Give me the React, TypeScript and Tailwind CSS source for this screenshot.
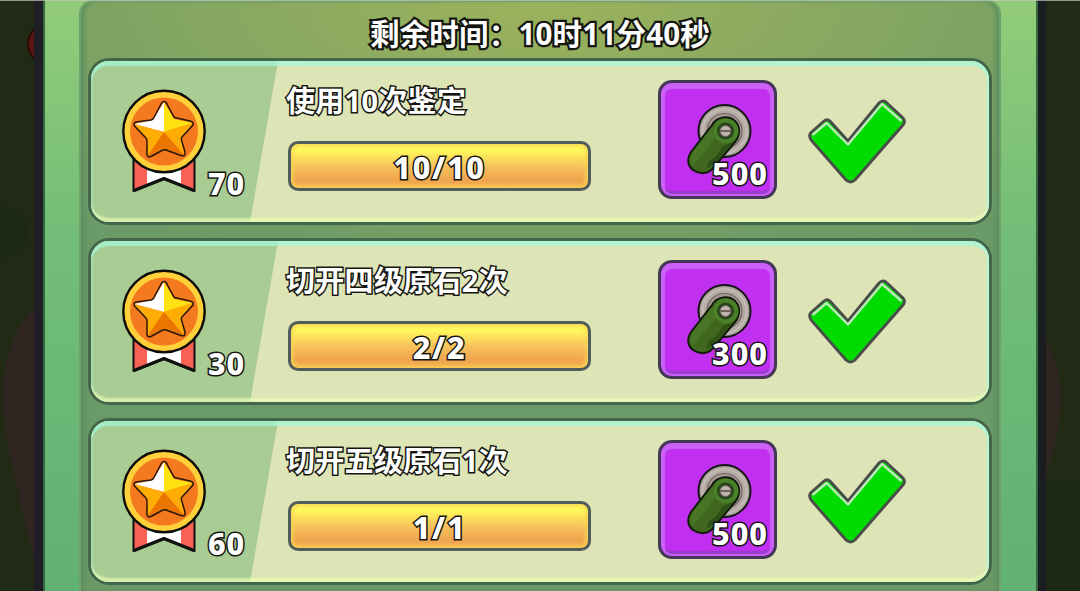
import { ReactNode } from "react"
import clsx from "clsx"

interface Task {
  title: string
  points: number
  progress: string
  reward: number
}

const tasks: Task[] = [
  { title: "使用10次鉴定", points: 70, progress: "10/10", reward: 500 },
  { title: "切开四级原石2次", points: 30, progress: "2/2", reward: 300 },
  { title: "切开五级原石1次", points: 60, progress: "1/1", reward: 500 },
]

function GameText({ children, className }: { children: ReactNode; className?: string }) {
  return (
    <span
      className={clsx(
        "block whitespace-nowrap leading-[40px] text-white [paint-order:stroke_fill]",
        className
      )}
    >
      {children}
    </span>
  )
}

function Medal() {
  return (
    <svg className="block h-[106px] w-[88px]" viewBox="0 0 88 106">
      <path d="M13 66H75V103L44 91L13 103Z" fill="#fb6256" />
      <path d="M27 66H61V96L44 90L27 96Z" fill="#fff" />
      <path d="M13.500 66H74.500V103L44 91L13.500 103Z" fill="none" stroke="#10110f" strokeWidth="2" strokeLinejoin="round" />
      <path d="M14 102.500L44 90.500L74 102.500" fill="none" stroke="#10110f" strokeWidth="3" strokeLinejoin="round" />
      <circle cx="44" cy="43.500" r="40.700" fill="#ffd03a" stroke="#0b0b08" strokeWidth="2.400" />
      <circle cx="44" cy="43.500" r="34" fill="#f5791f" />
      <g>
        <path d="M44 44V14L54 31L73 35Z" fill="#ffe211" />
        <path d="M44 44V14L33 32L14 36Z" fill="#fff" />
        <path d="M44 44L14 36L27 51L27 69Z" fill="#ffac05" />
        <path d="M44 44L27 69L44 62L64 67Z" fill="#ea7500" />
        <path d="M44 44L64 67L62 50L73 35Z" fill="#ffac05" />
      </g>
      <path
        d="M44 13.500Q46 13 48 18L54 29Q55 30 57 30L70 33Q74 34 73 37L62 49Q61 50 61.500 52L65 64Q66 69 61 67.500L46 62Q44 61.500 42 62.500L31 68.500Q27 70 27 66V53Q27 51 25.500 49.500L14.500 38Q13 35 16 34L31 32Q33 31.500 34 29.500L40 18Q42 13.500 44 13.500Z"
        fill="none"
        stroke="#29170a"
        strokeWidth="1.500"
      />
    </svg>
  )
}

function Crank() {
  return (
    <svg className="block h-[74px] w-[68px]" viewBox="0 0 68 74">
      <circle cx="37.500" cy="29" r="26" fill="#aea49f" stroke="#141414" strokeWidth="2" />
      <circle cx="37.500" cy="29" r="22" fill="#b3a8a4" stroke="#c2b9b3" strokeWidth="2.500" />
      <circle cx="37.500" cy="29" r="17.500" fill="#a89995" stroke="#706461" strokeWidth="1.200" />
      <path
        d="M25 23C30 14 42 13 48 19C54 25 53 34 48 40L27 65C22 72 13 73 6 68C0 63 0 56 4 50Z"
        fill="#3f681e"
        stroke="#11190b"
        strokeWidth="2"
      />
      <path d="M26 24L6 50C2 56 3 61 6 64L30 34Z" fill="#487425" />
      <path d="M46 40L36 44L29 54L22 59L19 67L27 63Z" fill="#2f5217" />
      <circle cx="39" cy="29" r="12.500" fill="#4a8027" />
      <circle cx="38.500" cy="29" r="8.500" fill="#29451b" />
      <circle cx="38.500" cy="29" r="5.500" fill="#c0b4b1" stroke="#655b57" />
      <path d="M33.500 29H43.500" stroke="#5b4942" strokeWidth="1.500" />
    </svg>
  )
}

function CheckMark() {
  return (
    <svg className="block h-[88px] w-[102px]" viewBox="0 0 102 88">
      <path
        d="M3.500 35L17 23Q20 20.500 23 23L41 43L72 5Q75.500 1.500 79 4L96 20Q99 23.500 96 27L48 82Q43.500 86 39 82L4 42Q1.500 38 3.500 35Z"
        fill="#00dc00"
        stroke="#4b4b4b"
        strokeWidth="2.800"
      />
      <path d="M5.500 37L19.500 25L41 46.500L75 6L94.500 23" fill="none" stroke="#bfe9bb" strokeWidth="2.400" strokeLinejoin="round" />
    </svg>
  )
}

function RewardSlot({ amount }: { amount: number }) {
  return (
    <div className="relative h-[119px] w-[119px] rounded-[14px] border-[3px] border-[#453857] bg-[#c130f0] shadow-[inset_0_2px_1px_4px_#cb61f7,inset_0_-4px_1px_1px_#973dcc]">
      <div className="pl-[26px] pt-[19px]">
        <Crank />
      </div>
      <GameText className="absolute right-[6px] top-[70px] text-[30.500px] font-extrabold tracking-[1px] [-webkit-text-stroke:3px_#14150f]">
        {amount}
      </GameText>
    </div>
  )
}

function TaskCard({ task }: { task: Task }) {
  return (
    <div className="relative flex h-[167px] w-[904px] overflow-hidden rounded-[21px] border-[3px] border-[#43664a] bg-[#dde4b5]">
      <div className="flex h-full w-[187px] shrink-0 bg-[#a9cb94] pl-[29px] pt-[27px] [clip-path:polygon(0_0,100%_0,159px_100%,0_100%)]">
        <Medal />
        <GameText className="mt-[75px] text-[30.500px] font-extrabold tracking-[0.8px] [-webkit-text-stroke:3px_#14150f]">
          {task.points}
        </GameText>
      </div>
      <div className="w-[311px] shrink-0 pl-[10px] pt-[20px]">
        <GameText className="-ml-[2px] text-[29px] font-bold tracking-[0.3px] [-webkit-text-stroke:3px_#14150f]">
          {task.title}
        </GameText>
        <div className="mt-[20px] flex h-[50px] w-[303px] items-center justify-center rounded-[10px] border-[3px] border-[#505d5b] bg-linear-to-b from-[#fff85c] from-15% via-[#f7c35b] via-50% to-[#f0a650] to-80% shadow-[inset_0_0_4px_2px_#f9d854]">
          <GameText className="pt-px text-[30.500px] font-extrabold tracking-[1.8px] [-webkit-text-stroke:3px_#14150f]">
            {task.progress}
          </GameText>
        </div>
      </div>
      <div className="pl-[69px] pt-[19px]">
        <RewardSlot amount={task.reward} />
      </div>
      <div className="pl-[30px] pt-[37px]">
        <CheckMark />
      </div>
      <div className="pointer-events-none absolute inset-0 rounded-[18px] shadow-[inset_0_6px_1px_-1px_#a4f8d8b8,inset_0_-5px_2px_-1px_#edffb6aa,inset_-2px_0_1px_#b9f6d9,inset_2px_0_2px_#a4e8c099]" />
    </div>
  )
}

export default function App() {
  return (
    <div className="flex h-[591px] w-[1080px] overflow-hidden bg-[#202a14] font-['Noto_Sans','Noto_Sans_CJK_SC',sans-serif]">
      <svg className="h-full w-[34px] shrink-0" viewBox="0 0 34 591">
        <ellipse cx="38" cy="44" rx="10" ry="15" fill="#5b1713" stroke="#2b0d08" strokeWidth="2" />
        <circle cx="3" cy="232" r="25" fill="#1c2914" />
        <path d="M34 308Q6 335 3 390Q3 430 13 470L34 560Z" fill="#302521" />
      </svg>
      <div className="h-full w-[9px] shrink-0 bg-[#1f1e26]" />
      <div className="flex h-full w-[995px] shrink-0 border-x-2 border-[#34683f] bg-linear-to-b from-[#93cc79] via-[#72bd78] via-40% to-[#62b174] pl-[34px]">
        <div className="h-full w-[922px] rounded-t-[14px] border-x-2 border-t-2 border-[#6ea46c] bg-[radial-gradient(ellipse_720px_280px_at_50%_0,#9db35c,#6a9a67)] shadow-[inset_6px_0_5px_-3px_#5c8b60,inset_-6px_0_5px_-3px_#5c8b60]">
          <GameText className="h-[56px] pt-[12px] text-center text-[29.500px] font-bold tracking-[0.2px] [-webkit-text-stroke:4.4px_#14150f]">
            剩余时间：10时11分40秒
          </GameText>
          <div className="flex w-[911px] flex-col gap-[13px] pl-[7px]">
            {tasks.map((task) => (
              <TaskCard key={task.title} task={task} />
            ))}
          </div>
        </div>
      </div>
      <div className="h-full w-[8px] shrink-0 bg-[#1c1d23]" />
      <svg className="h-full w-[34px] shrink-0" viewBox="0 0 34 591">
        <path d="M0 340Q29 390 0 475Z" fill="#302521" />
        <path d="M0 482H34V591H0Z" fill="#1b2915" />
      </svg>
      <div className="pointer-events-none absolute left-0 top-0 h-px w-[1080px] bg-[#c4c8c0]/70" />
    </div>
  )
}
